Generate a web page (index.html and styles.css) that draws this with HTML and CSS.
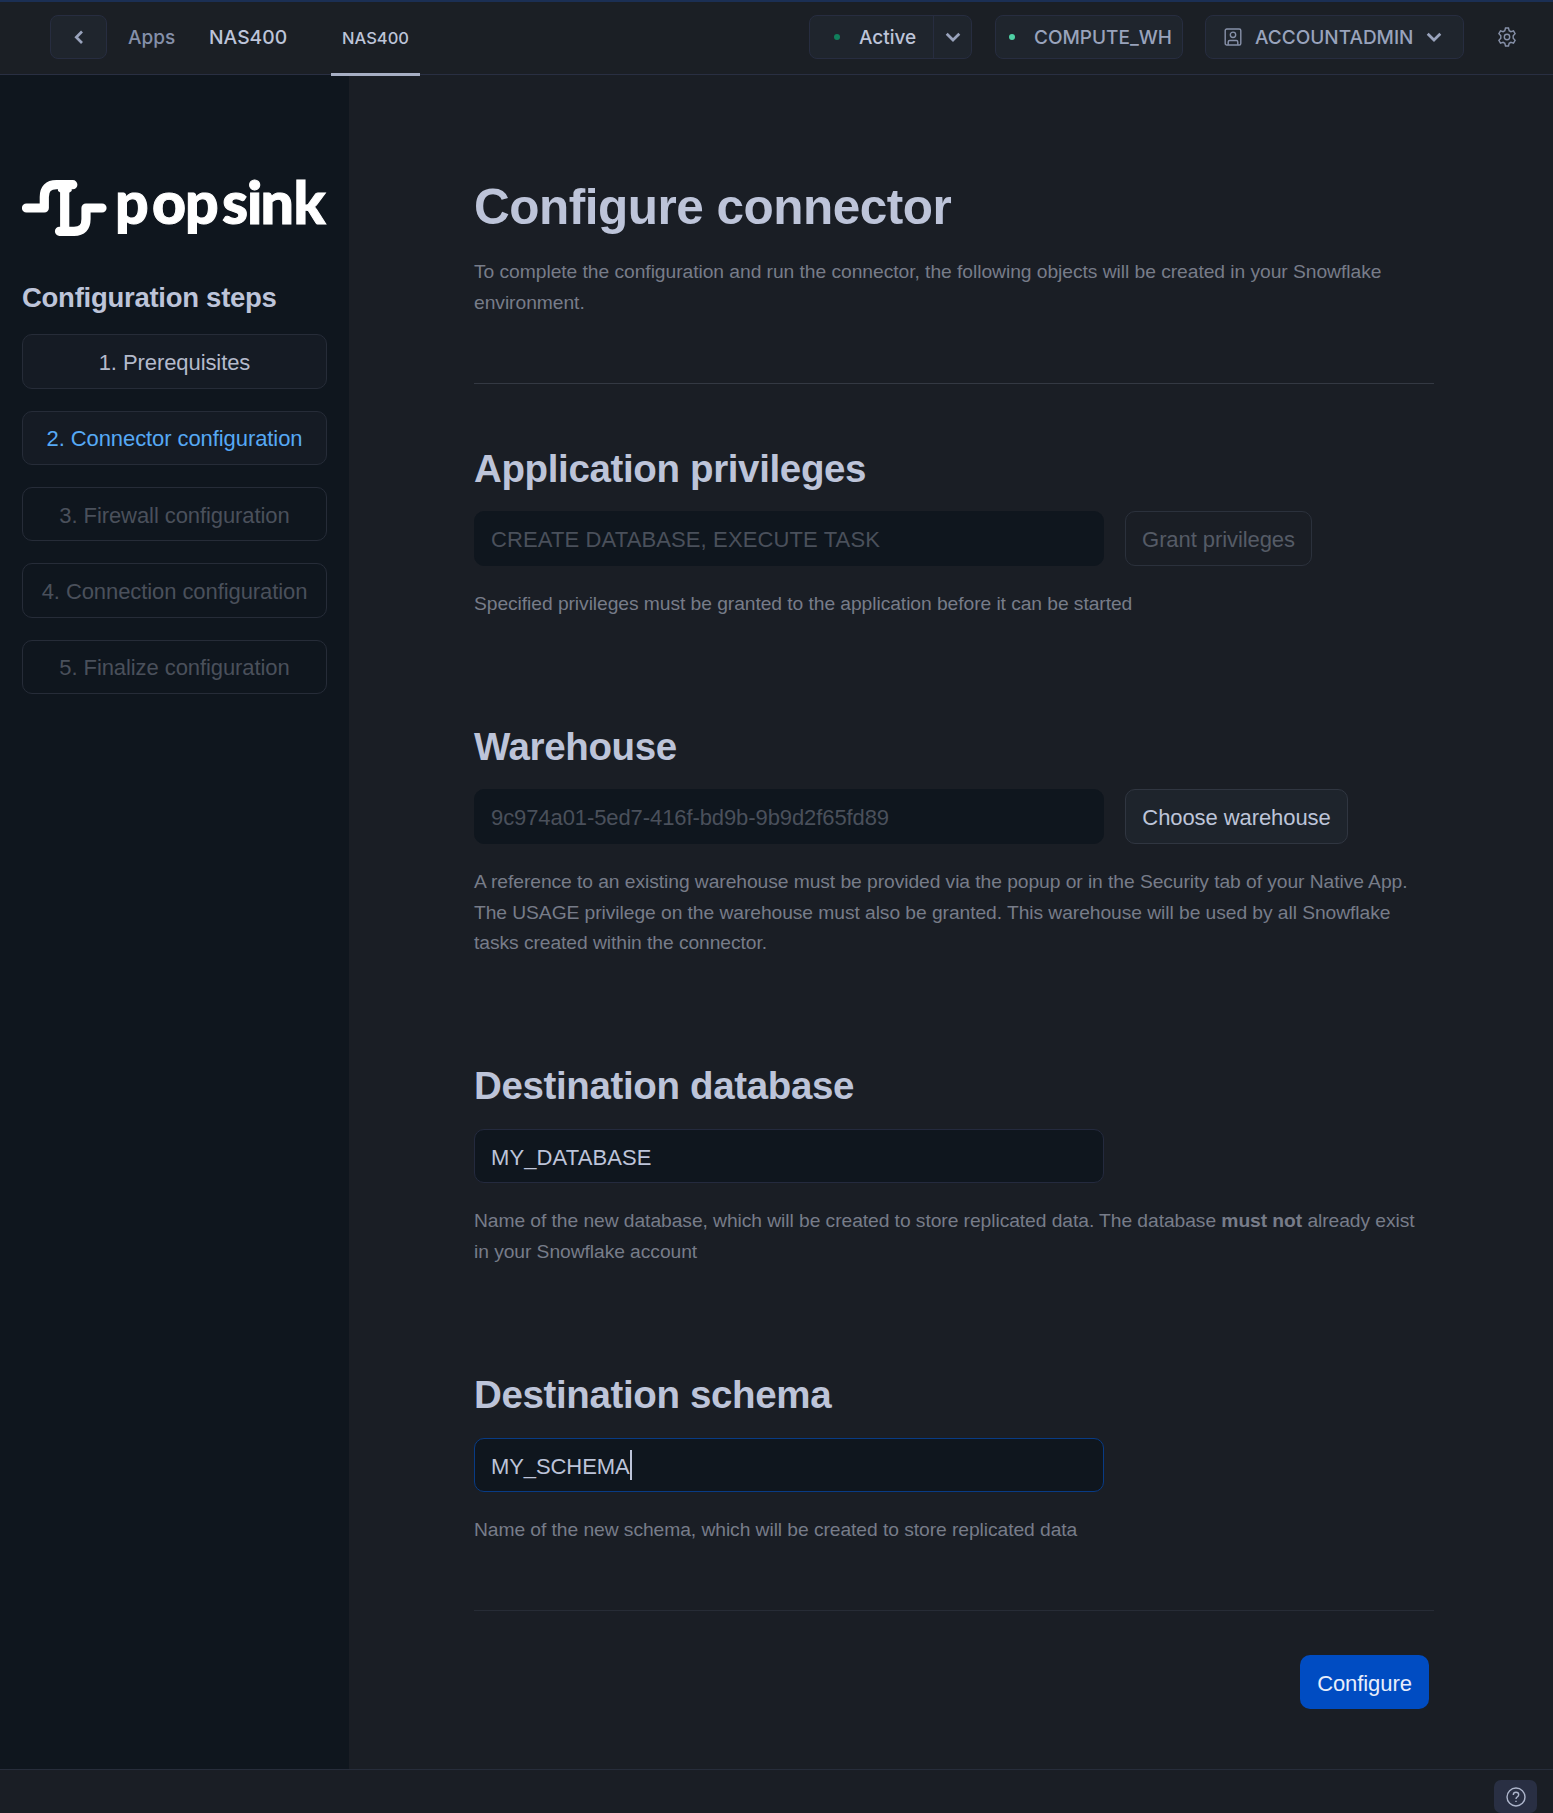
FILE: index.html
```html
<!DOCTYPE html>
<html lang="en">
<head>
<meta charset="utf-8">
<title>NAS400 - Configure connector</title>
<link rel="stylesheet" href="styles.css">
</head>
<body>
<header class="topbar">
  <button class="chip back" aria-label="Back"><svg width="10" height="15" viewBox="0 0 10 15"><path d="M8 1.5 2.3 7.3 8 13"/></svg></button>
  <a class="crumb crumb-apps">Apps</a>
  <span class="crumb crumb-name">NAS400</span>
  <nav class="tab">NAS400</nav>
  <div class="tools">
    <div class="chip status"><div class="status-main"><i class="dot dim"></i><span>Active</span></div><div class="status-more"><svg width="16" height="10" viewBox="0 0 16 10"><path d="M1.7 1.7 8 8 14.3 1.7"/></svg></div></div>
    <div class="chip warehouse"><i class="dot"></i><span>COMPUTE_WH</span></div>
    <div class="chip role"><svg class="thin" width="18" height="18" viewBox="0 0 18 18"><rect x="1.2" y="1" width="15.6" height="16" rx="1.6"/><circle cx="9" cy="6.8" r="2.7"/><path d="M4.2 16.8V14q0-1.5 1.5-1.5h6.6q1.5 0 1.5 1.5v2.8"/></svg><span>ACCOUNTADMIN</span><svg width="16" height="10" viewBox="0 0 16 10"><path d="M1.7 1.7 8 8 14.3 1.7"/></svg></div>
    <svg class="thin gear" width="20" height="20" viewBox="0 0 20 20"><path d="M8.500 1h3l.7 2.700 1.700 1 2.600-.8 1.600 2.800-1.900 2v2.600l1.900 2-1.600 2.800-2.600-.8-1.700 1-.7 2.700h-3l-.7-2.700-1.700-1-2.600.8-1.600-2.800 1.900-2V8.700l-1.900-2 1.600-2.800 2.600.8 1.700-1z"/><circle cx="10" cy="10" r="2.700"/></svg>
  </div>
</header>
<div class="body">
  <aside class="sidebar">
    <svg class="logo" width="306" height="76" viewBox="0 -12 306 76" role="img" aria-label="popsink">
      <path class="mark" d="M4.500 31H22.300V20Q22.300 7.700 34.500 7.700H50.800M42.700 8V54M37.500 54.300H52Q64 54.300 64 42V31H80"/>
      <path class="serif" d="M36 12h13.700v2l-2.200 1.500h-9.300L36 14z"/>
      <text class="wordmark" x="93 130 163 200 225 238.500 271.500" y="46.500">popsink</text>
    </svg>
    <h3 class="side-title">Configuration steps</h3>
    <div class="steps">
      <button class="step">1. Prerequisites</button>
      <button class="step current">2. Connector configuration</button>
      <button class="step off">3. Firewall configuration</button>
      <button class="step off">4. Connection configuration</button>
      <button class="step off">5. Finalize configuration</button>
    </div>
  </aside>
  <main class="main">
    <h1 class="title">Configure connector</h1>
    <p class="help intro">To complete the configuration and run the connector, the following objects will be created in your Snowflake<br>environment.</p>
    <hr class="rule">
    <section class="group">
      <h2 class="heading">Application privileges</h2>
      <div class="row"><div class="field disabled caps">CREATE DATABASE, EXECUTE TASK</div><button class="btn disabled grant">Grant privileges</button></div>
      <p class="help">Specified privileges must be granted to the application before it can be started</p>
    </section>
    <section class="group">
      <h2 class="heading">Warehouse</h2>
      <div class="row"><div class="field disabled">9c974a01-5ed7-416f-bd9b-9b9d2f65fd89</div><button class="btn choose">Choose warehouse</button></div>
      <p class="help">A reference to an existing warehouse must be provided via the popup or in the Security tab of your Native App.<br>The USAGE privilege on the warehouse must also be granted. This warehouse will be used by all Snowflake<br>tasks created within the connector.</p>
    </section>
    <section class="group">
      <h2 class="heading">Destination database</h2>
      <div class="row"><div class="field caps">MY_DATABASE</div></div>
      <p class="help">Name of the new database, which will be created to store replicated data. The database <b>must not</b> already exist<br>in your Snowflake account</p>
    </section>
    <section class="group">
      <h2 class="heading">Destination schema</h2>
      <div class="row"><div class="field focus">MY_SCHEMA<i class="caret"></i></div></div>
      <p class="help">Name of the new schema, which will be created to store replicated data</p>
    </section>
    <hr class="rule end">
    <div class="actions"><button class="btn primary">Configure</button></div>
  </main>
</div>
<footer class="footer"><button class="ask" aria-label="Help"><svg class="thin" width="20" height="20" viewBox="0 0 20 20"><circle cx="10" cy="10" r="9"/><path d="M7.300 8Q7.300 5.300 10 5.300T12.700 7.700Q12.700 9 11.300 9.800 10 10.500 10 12"/><path d="M10 13.700v1.400"/></svg></button></footer>
</body>
</html>
```
FILE: styles.css
```css
* { box-sizing: border-box; }
body {
  margin: 0;
  width: 1553px;
  height: 1813px;
  display: flex;
  flex-direction: column;
  overflow: hidden;
  background: #1a1e25;
  color: #bdc4d9;
  font-family: "Liberation Sans", Arial, sans-serif;
}
button { font: inherit; color: inherit; padding: 0; margin: 0; }
h1, h2, h3, p { margin: 0; }
svg { fill: none; stroke: #99a3bc; stroke-width: 2.7; flex: none; display: block; }
svg.thin { stroke: #8791a9; stroke-width: 1.4; }

.topbar {
  position: relative;
  z-index: 1;
  height: 75px;
  flex: none;
  display: flex;
  align-items: center;
  border-top: 2px solid #1b2f54;
  border-bottom: 1px solid #292f42;
  background: #1b1f25;
  padding: 0 0 2px 50px;
  font-family: Inter, sans-serif;
  font-weight: 500;
  font-size: 19px;
}
.chip {
  height: 44px;
  display: flex;
  align-items: center;
  border: 1px solid #272d40;
  border-radius: 8px;
  background: #1f252d;
}
.back { width: 57px; justify-content: center; }
.crumb-apps { margin-left: 21px; width: 81px; color: #8590aa; }
.crumb-name { width: 122px; font-size: 19.3px; }
.tab {
  width: 89px;
  height: 74px;
  flex: none;
  align-self: flex-start;
  border-bottom: 3px solid #a7afc4;
  display: flex;
  align-items: center;
  justify-content: center;
  font-size: 16.5px;
}
.tools { margin-left: 389px; display: flex; align-items: center; color: #99a3bc; }
.status { width: 163px; color: #bdc4d9; }
.status-main { width: 124px; height: 100%; display: flex; align-items: center; padding-left: 24px; border-right: 1px solid #272d40; gap: 19px; }
.status-more { flex: 1; display: flex; justify-content: center; }
.dot { width: 6px; height: 6px; border-radius: 3px; background: #4fd1a5; }
.dot.dim { background: #117f5c; }
.warehouse { width: 188px; margin-left: 23px; padding-left: 13px; gap: 19px; }
.role { width: 259px; margin-left: 22px; padding-left: 18px; gap: 13px; }
.gear { margin-left: 33px; }

.body { flex: 1; display: flex; min-height: 0; }
.sidebar { width: 349px; background: #0f161e; padding: 90px 22px 0; }
.logo { stroke: none; }
.mark { stroke: #fff; stroke-width: 9.2px; stroke-linecap: round; stroke-linejoin: round; }
.serif { fill: #fff; stroke: none; }
.wordmark { fill: #fff; stroke: #fff; stroke-width: 1px; font: 900 59px Lato, sans-serif; }
.side-title { margin-top: 39px; height: 36px; line-height: 36px; font-size: 27.5px; letter-spacing: -0.27px; white-space: nowrap; }
.steps { margin-top: 18.4px; display: grid; gap: 21.8px; }
.step {
  height: 54.5px;
  padding-top: 3px;
  border: 1px solid #262c38;
  border-radius: 10px;
  background: #151b24;
  font-size: 22px;
  letter-spacing: -0.08px;
  white-space: nowrap;
  color: #b4bacb;
}
.step.current { color: #56a9f5; }
.step.off { background: transparent; color: #4a505b; }

.main { flex: 1; padding: 102px 119px 0 125px; }
.title { height: 60px; line-height: 60px; font-size: 49.5px; letter-spacing: -0.5px; }
.help { font-size: 19.25px; line-height: 30.8px; letter-spacing: -0.065px; color: #777c89; white-space: nowrap; }
.intro { margin-top: 20px; letter-spacing: -0.05px; }
.rule { height: 1px; border: 0; margin: 64px 0 62px; background: #343943; }
.group { margin-bottom: 104.2px; }
.heading { height: 46px; line-height: 46px; font-size: 38.5px; letter-spacing: -0.36px; margin-bottom: 19.5px; }
.row { display: flex; gap: 21px; margin-bottom: 23px; }
.field {
  width: 630px;
  height: 54.6px;
  display: flex;
  align-items: center;
  padding: 3px 16px 0;
  border: 1px solid #242a3e;
  border-radius: 10px;
  background: #0f161e;
  font-size: 22px;
  letter-spacing: -0.09px;
}
.field.caps { letter-spacing: 0.12px; }
.field.disabled { border-color: #0f161e; color: #4a505b; }
.field.focus { border-color: #083b85; }
.caret { width: 2px; height: 30px; margin-top: -3px; background: #bdc4d9; }
.btn { height: 54.6px; padding-top: 3px; border: 1px solid #303641; border-radius: 10px; background: #1e242c; font-size: 22px; letter-spacing: -0.08px; white-space: nowrap; }
.btn.disabled { background: transparent; border-color: #2b313c; color: #555b66; }
.grant { width: 187px; }
.choose { width: 223px; }
.rule.end { margin: -40.6px 0 44px; background: #272c36; }
.actions { display: flex; justify-content: flex-end; padding-right: 5px; }
.btn.primary { width: 129px; border: 0; background: #004cc2; color: #e8eefb; }

.footer { height: 44px; flex: none; border-top: 1px solid #272d3b; display: flex; justify-content: flex-end; align-items: flex-end; padding-right: 16px; }
.ask { width: 43px; height: 33px; border: 0; border-radius: 7px; background: #292f43; display: flex; align-items: center; justify-content: center; }
.ask svg { stroke: #adb5cb; }
```
